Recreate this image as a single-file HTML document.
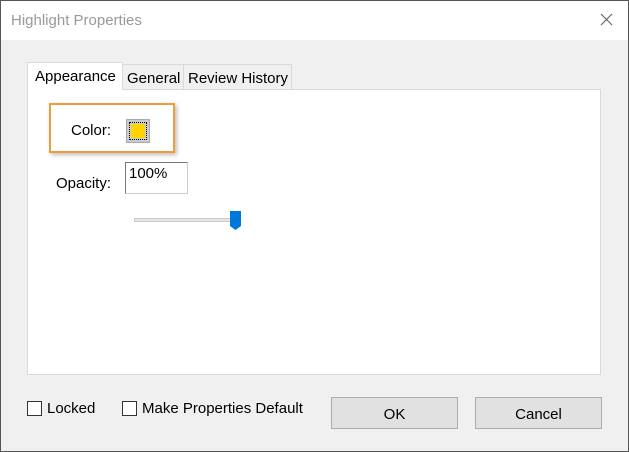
<!DOCTYPE html>
<html><head><style>
*{margin:0;padding:0;box-sizing:border-box}
body{width:629px;height:452px;overflow:hidden;font-family:"Liberation Sans",sans-serif;font-size:15px;color:#000;background:#f0f0f0;position:relative}
.frame{position:absolute;left:0;top:0;width:629px;height:452px;border:1px solid #555;z-index:5;pointer-events:none}
.title{position:absolute;left:0;top:0;width:629px;height:40px;background:#fff}
.title span{position:absolute;left:11px;top:12px;font-size:15px;color:#999}
.abs{position:absolute}
.panel{left:27px;top:89px;width:574px;height:286px;background:#fff;border:1px solid #d9d9d9}
.tab{position:absolute;border:1px solid #d9d9d9;border-bottom:none;background:#f0f0f0;font-size:15px;padding-left:4px}
.cb{width:15px;height:15px;border:1px solid #333;background:#fff}
.btn{border:1px solid #adadad;background:#e1e1e1;text-align:center;line-height:33px}
</style></head><body>
<div class="frame"></div>
<div class="title"><span>Highlight Properties</span>
<svg class="abs" style="left:600px;top:13px" width="13" height="13"><path d="M1 1L12 12M12 1L1 12" stroke="#666" stroke-width="1.2"/></svg></div>
<div class="abs panel"></div>
<div class="tab" style="left:122px;top:64px;width:62px;height:25px;line-height:27px">General</div>
<div class="tab" style="left:183px;top:64px;width:109px;height:25px;line-height:27px">Review History</div>
<div class="tab" style="left:27px;top:62px;width:96px;height:28px;line-height:27px;background:#fff;padding-left:7px">Appearance</div>
<div class="abs" style="left:49px;top:103px;width:126px;height:50px;border:2px solid #f49a3a;box-shadow:2px 2px 4px rgba(0,0,0,.25)"></div>
<div class="abs" style="left:71px;top:122px">Color:</div>
<div class="abs" style="left:126px;top:119px;width:24px;height:24px;background:#ccc;border:1px solid #aaa;padding:2px"><div style="width:18px;height:18px;border:1px dotted #000;padding:1px"><div style="width:14px;height:14px;background:#ffd400"></div></div></div>
<div class="abs" style="left:56px;top:175px">Opacity:</div>
<div class="abs" style="left:125px;top:162px;width:63px;height:32px;background:#fff;border:1px solid #ccc;border-left-color:#777;border-top-color:#777;padding:2px 3px">100%</div>
<div class="abs" style="left:134px;top:218px;width:100px;height:4px;background:#e6e6e6;border:1px solid #ccc"></div>
<svg class="abs" style="left:230px;top:211px" width="12" height="20"><path d="M0 0H11V15L5.5 19L0 15Z" fill="#0078d7"/></svg>
<div class="abs cb" style="left:27px;top:401px"></div>
<div class="abs" style="left:47px;top:400px">Locked</div>
<div class="abs cb" style="left:122px;top:401px"></div>
<div class="abs" style="left:142px;top:400px">Make Properties Default</div>
<div class="abs btn" style="left:331px;top:397px;width:127px;height:32px">OK</div>
<div class="abs btn" style="left:475px;top:397px;width:127px;height:32px">Cancel</div>
</body></html>
